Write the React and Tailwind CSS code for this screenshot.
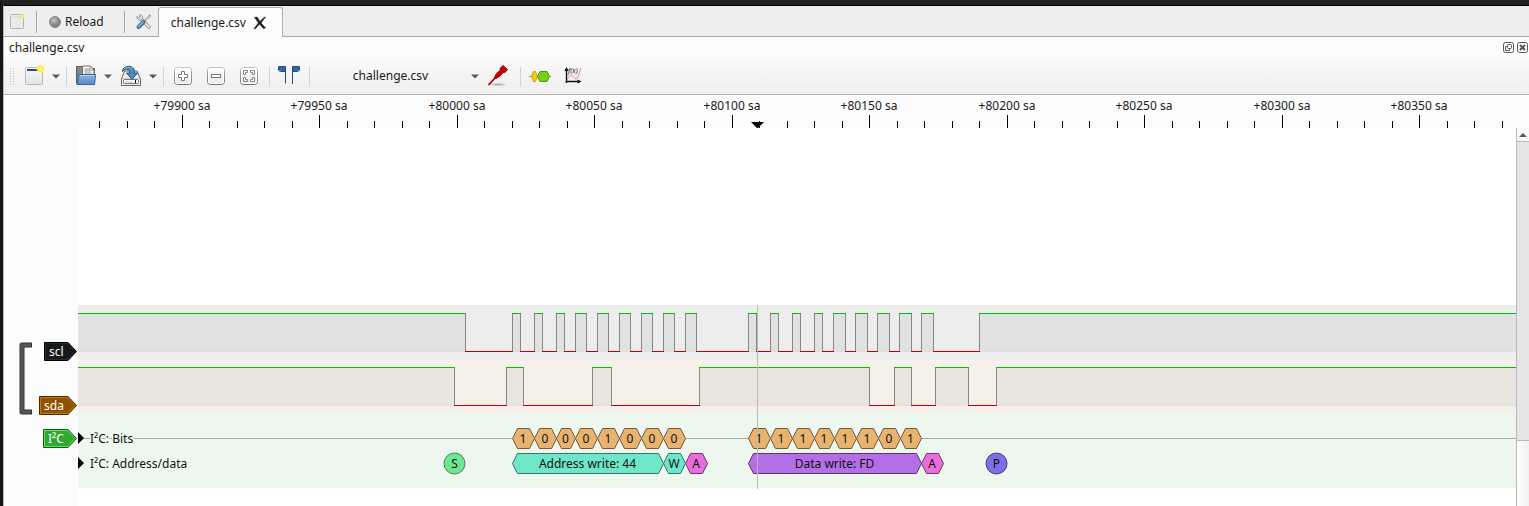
import React from "react";

const SCL_EDGES = [
  465, 512, 520, 534, 542, 556, 564, 575, 586, 597, 608, 619, 630, 641, 652, 663, 674, 685, 696,
  748, 756, 770, 778, 792, 800, 814, 822, 833, 845, 855, 867, 877, 889, 899, 911, 921, 933, 979,
];
const SDA_EDGES = [454, 506, 523, 592, 611, 699, 869, 894, 911, 935, 968, 996];

const BITS = [
  [512, 534, "1"], [534, 556, "0"], [556, 575, "0"], [575, 597, "0"],
  [597, 619, "1"], [619, 641, "0"], [641, 663, "0"], [663, 685, "0"],
  [748, 770, "1"], [770, 792, "1"], [792, 814, "1"], [814, 834, "1"],
  [834, 856, "1"], [856, 878, "1"], [878, 900, "0"], [900, 921, "1"],
];

const WORDS = [
  [512, 663, "Address write: 44", "#6ee7c9", "#37746a"],
  [663, 685, "W", "#6ee7c9", "#37746a"],
  [685, 707, "A", "#e76edc", "#74376e"],
  [748, 921, "Data write: FD", "#b46ee7", "#5a3774"],
  [921, 943, "A", "#e76edc", "#74376e"],
];

const FAR = 6000;

function Trace({ edges, top, fill }) {
  const points = [0, ...edges, FAR];
  const low = top + 38;
  return (
    <g shapeRendering="crispEdges">
      {points.slice(0, -1).map((x, i) =>
        i % 2 === 0 ? (
          <rect key={x} x={x} y={top} width={points[i + 1] - x} height="38" fill={fill} />
        ) : null
      )}
      <rect x="0" y={low} width={FAR} height="1" fill="#000" fillOpacity="0.07" />
      {edges.map((x) => (
        <rect key={x} x={x} y={top} width="1" height="38" fill="#878787" />
      ))}
      {points.slice(0, -1).map((x, i) => (
        <rect
          key={x}
          x={x}
          y={i % 2 === 0 ? top : low}
          width={points[i + 1] - x + 1}
          height="1"
          fill={i % 2 === 0 ? "#00c000" : "#c00000"}
        />
      ))}
    </g>
  );
}

function Hexagon({ x1, x2, cy, label, fill, stroke }) {
  const a = x1 + 0.5;
  const b = x2 + 0.5;
  const m = cy + 0.5;
  return (
    <g>
      <polygon
        points={`${a},${m} ${a + 5},${m - 10} ${b - 5},${m - 10} ${b},${m} ${b - 5},${m + 10} ${a + 5},${m + 10}`}
        fill={fill}
        stroke={stroke}
      />
      <text x={(x1 + x2) / 2} y={cy + 5} textAnchor="middle" fill="#111">{label}</text>
    </g>
  );
}

function Circle({ cx, label, fill, stroke }) {
  return (
    <g>
      <circle cx={cx + 0.5} cy="463.5" r="10.5" fill={fill} stroke={stroke} />
      <text x={cx + 0.5} y="468" textAnchor="middle" fill="#111">{label}</text>
    </g>
  );
}

function Ruler() {
  const ticks = Array.from({ length: 52 }, (_, i) => i - 3);
  return (
    <svg className="block h-[33px] w-full bg-[#fcfcfc] text-xs" role="img" aria-label="Sample ruler">
      <g transform="translate(-4,-95)">
        {ticks.map((k) => {
          const x = Math.floor(182 + 27.5 * k);
          const major = k % 5 === 0;
          return (
            <g key={k}>
              <rect x={x} y={major ? 115 : 121} width="1" height={major ? 13 : 7} fill="#000" />
              {major && (
                <text x={x} y="110" textAnchor="middle" fill="#1a1a1a">
                  {`+${79900 + k * 10} sa`}
                </text>
              )}
            </g>
          );
        })}
        <path d="M751 122h13l-6 6h-1z" fill="#000" />
      </g>
    </svg>
  );
}

function TraceView() {
  return (
    <svg className="block h-[378px] w-full bg-white text-xs" role="img" aria-label="Decoded logic traces">
      <rect y="177" width="100%" height="54" fill="#ededed" />
      <rect y="231" width="100%" height="54" fill="#f5f0ea" />
      <rect y="285" width="100%" height="75" fill="#edf7ee" />
      <g transform="translate(-78,-128)">
        <Trace edges={SCL_EDGES} top={313} fill="#e1e1e1" />
        <Trace edges={SDA_EDGES} top={367} fill="#e9e6df" />
        <rect x="78" y="438" width="434" height="1" fill="#a6aca7" />
        <rect x="686" y="438" width="63" height="1" fill="#a6aca7" />
        <rect x="922" y="438" width={FAR} height="1" fill="#a6aca7" />
        <path d="M78 432l6 6-6 6zM78 457l6 6-6 6z" fill="#000" />
        <g fill="#111" stroke="#edf7ee" strokeWidth="3" paintOrder="stroke">
          <text x="90" y="443">I²C: Bits</text>
          <text x="90" y="468">I²C: Address/data</text>
        </g>
        {BITS.map(([a, b, t]) => (
          <Hexagon key={a} x1={a} x2={b} cy={438} label={t} fill="#e7b36e" stroke="#745937" />
        ))}
        {WORDS.map(([a, b, t, f, s]) => (
          <Hexagon key={a} x1={a} x2={b} cy={463} label={t} fill={f} stroke={s} />
        ))}
        <Circle cx={454} label="S" fill="#6ee790" stroke="#46805a" />
        <Circle cx={996} label="P" fill="#7d6ee7" stroke="#463c80" />
        <rect x="757" y="305" width="1" height="184" fill="#b9b9b9" />
      </g>
    </svg>
  );
}

function SignalTag({ children, width, fill, border, inner }) {
  const w = width;
  return (
    <button type="button" className="relative flex h-[19px] items-center pl-[5px] text-left text-white" style={{ width }}>
      <svg className="absolute inset-0 h-full w-full" viewBox={`0 0 ${w} 19`} aria-hidden="true">
        <path d={`M.5 .5H${w - 9}L${w - 0.5} 9.5L${w - 9} 18.5H.5z`} fill={fill} stroke={border} />
        <path d={`M1.5 1.5H${w - 9.5}L${w - 2} 9.5L${w - 9.5} 17.5H1.5z`} fill="none" stroke={inner} />
      </svg>
      <span className="relative leading-4">{children}</span>
    </button>
  );
}

function Separator() {
  return <div className="h-[19px] w-px shrink-0 bg-[#d3d3d3]" />;
}

function IconButton({ label, className = "", children }) {
  return (
    <button type="button" aria-label={label} className={`h-[22px] w-[22px] shrink-0 ${className}`}>
      <svg viewBox="0 0 22 22" className="block h-[22px] w-[22px]" aria-hidden="true">{children}</svg>
    </button>
  );
}

function Arrow() {
  return (
    <svg viewBox="0 0 12 12" className="block h-3 w-3" aria-hidden="true">
      <path d="M2 4.500h8L6 8.500z" fill="#5a5a5a" />
    </svg>
  );
}

function MenuArrow({ label, className = "" }) {
  return (
    <button type="button" aria-label={label} className={`shrink-0 ${className}`}><Arrow /></button>
  );
}

function ZoomFrame() {
  return (
    <>
      <rect x="2.500" y="2.500" width="17" height="17" rx="3" fill="url(#zoomFace)" stroke="url(#zoomEdge)" />
      <rect x="3.500" y="3.500" width="15" height="15" rx="2" fill="none" stroke="#fff" />
    </>
  );
}

function Toolbar() {
  return (
    <div role="toolbar" aria-label="Session" className="flex h-[39px] items-center border-b border-[#b3b3b3] bg-linear-to-b from-[#fbfbfb] to-[#eeeeee] pt-[2px] pl-[6px]">
      <svg viewBox="0 0 4 17" className="h-[17px] w-1 shrink-0" aria-hidden="true">
        <path d="M.5 0v17M3.500 0v17" stroke="#bdbdbd" strokeDasharray="1 1.6" />
      </svg>
      <IconButton label="New session" className="ml-[9px]">
        <defs>
          <linearGradient id="page" x1="0" y1="0" x2="0" y2="1"><stop stopColor="#fafafa" /><stop offset="1" stopColor="#e2e2e2" /></linearGradient>
          <radialGradient id="spark"><stop stopColor="#fffce0" /><stop offset=".5" stopColor="#f7ee36" /><stop offset=".8" stopColor="#f9f258" /><stop offset="1" stopColor="#f9f258" stopOpacity=".3" /></radialGradient>
        </defs>
        <rect x="2.500" y="2.500" width="17" height="17" rx="1" fill="url(#page)" stroke="#b9b9b9" />
        <rect x="4" y="4" width="12" height="2" fill="#204a87" />
        <circle cx="17.500" cy="4" r="4" fill="url(#spark)" />
      </IconButton>
      <MenuArrow label="New session menu" className="ml-[5px] mr-1" />
      <Separator />
      <IconButton label="Open" className="ml-2">
        <defs><linearGradient id="folder" x1="0" y1="0" x2="0" y2="1"><stop stopColor="#8fb6e4" /><stop offset="1" stopColor="#5687c2" /></linearGradient></defs>
        <path d="M1.500 18.500V1.500h7l1.500 2h9.500v14.500z" fill="#858783" stroke="#5b5d5a" />
        <path d="M7.500 12V1h8l3.500 4v8h-11.500z" fill="#f5f5f5" stroke="#70726f" />
        <path d="M9.500 4h5M9.500 6h6M9.500 8h7M15 1.500V5h3.500" stroke="#949494" fill="none" />
        <path d="M4 9.500h16.500l-1 10H2z" fill="url(#folder)" stroke="#3465a4" />
        <path d="M5 10.500h14.500" stroke="#b4cfee" />
      </IconButton>
      <MenuArrow label="Open menu" className="ml-[5px] mr-[6px]" />
      <IconButton label="Save">
        <path d="M4.500 6h12.500l3.500 8v6.500h-19V14z" fill="#ededeb" stroke="#666965" strokeLinejoin="round" />
        <path d="M2 13.500h18" stroke="#d0d0ce" />
        <rect x="3.500" y="14.500" width="15" height="4" rx="1" fill="#fafafa" stroke="#777" />
        <path d="M4.500 17h8" stroke="#c6c6c6" />
        <path d="M15.500 15v3" stroke="#000" />
        <path d="M2.500 6.500C2.500 1 10 .2 12.500 2.500c2 1.600 2 3.500 2 5.500h3l-5.500 6.500L6.500 8h3.200C9.800 4.500 6 3 2.500 6.500z" fill="#4b8bbd" stroke="#285a84" strokeLinejoin="round" />
        <path d="M4 4.300C6 1.700 11 1.700 12.500 4.500" fill="none" stroke="#8fc0e0" />
      </IconButton>
      <MenuArrow label="Save menu" className="ml-[5px] mr-1" />
      <Separator />
      <IconButton label="Zoom in" className="ml-2 mr-[11px]">
        <defs>
          <linearGradient id="zoomFace" x1="0" y1="0" x2="0" y2="1"><stop stopColor="#fff" /><stop offset="1" stopColor="#e7e7e5" /></linearGradient>
          <linearGradient id="zoomEdge" x1="0" y1="0" x2="0" y2="1"><stop stopColor="#c0c0be" /><stop offset="1" stopColor="#6c6e6a" /></linearGradient>
        </defs>
        <ZoomFrame />
        <path d="M9.500 6.500h3v3h3v3h-3v3h-3v-3h-3v-3h3z" fill="#fff" stroke="#777975" />
      </IconButton>
      <IconButton label="Zoom out" className="mr-[11px]">
        <ZoomFrame />
        <rect x="6.500" y="9.500" width="9" height="3" fill="#fff" stroke="#777975" />
      </IconButton>
      <IconButton label="Zoom to fit" className="mr-[9px]">
        <ZoomFrame />
        <path d="M5.500 5.500h4v2h-2v2h-2zM16.500 5.500h-4v2h2v2h2zM5.500 16.500h4v-2h-2v-2h-2zM16.500 16.500h-4v-2h2v-2h2z" fill="#fff" stroke="#858783" />
      </IconButton>
      <Separator />
      <IconButton label="Show cursors" className="ml-2 mr-[9px]">
        <path d="M.500 1.500h7v17M.500 1.500v4l2 1h5M14.500 19V1.500h7v4l-2 1h-5" fill="none" stroke="#204a87" />
        <path d="M1 2h6v4H3L1 5zM15 2h6v3l-2 1h-4z" fill="#3465a4" />
      </IconButton>
      <Separator />
      <div className="relative ml-[10px] w-[161px] shrink-0">
        <select aria-label="Device" className="block h-6 w-full appearance-none bg-transparent pr-5 text-center text-xs [text-align-last:center]" defaultValue="challenge.csv">
          <option>challenge.csv</option>
        </select>
        <span className="pointer-events-none absolute top-[6px] right-0"><Arrow /></span>
      </div>
      <IconButton label="Configure channels" className="ml-[6px] mr-[11px]">
        <defs><radialGradient id="shade"><stop stopColor="#000" stopOpacity=".3" /><stop offset="1" stopColor="#000" stopOpacity="0" /></radialGradient></defs>
        <ellipse cx="11" cy="19.500" rx="10" ry="2" fill="url(#shade)" />
        <path d="M1.500 20L9.500 11.500" stroke="#a40000" strokeWidth="1.800" />
        <path d="M7.500 12.500L9.500 8.500 13.500 5l-.5-1.500L16 .500l4.500 4L18 7.500l-1.500-.5-3.500 4-4 2.500z" fill="#c00" stroke="#a40000" strokeLinejoin="round" />
        <path d="M13.500 4.500l3.500 3" stroke="#a40000" />
      </IconButton>
      <Separator />
      <IconButton label="Add protocol decoder" className="ml-2 mr-[11px]">
        <path d="M0 11.500h22" stroke="#888a85" />
        <path d="M2.500 11.500L4.500 6.500h2l2 5-2 5h-2z" fill="#edd400" stroke="#c4a000" />
        <path d="M8.500 11.500L11 6.500h7l2.500 5-2.500 5h-7z" fill="#73d216" stroke="#4e9a06" />
      </IconButton>
      <IconButton label="Add math signal">
        <path d="M4.500 4v14M3.500 16.500h14" stroke="#111" strokeWidth="1.300" />
        <path d="M4.500 2l2.200 4H2.300zM19.500 16.500l-4-2v4z" fill="#111" />
        <path d="M5 16c1-4 2.500-6 4.500-5.500s3.500 4.500 5.500 2.500c2-2 2-6 4-10" fill="none" stroke="#ef5350" strokeOpacity=".7" />
        <text x="6" y="8" fontSize="7" fontStyle="italic" fill="#222">f(x)</text>
      </IconButton>
    </div>
  );
}

function SessionTabs() {
  return (
    <nav aria-label="Sessions" className="flex h-[31px] items-stretch bg-[#eeeeee] shadow-[inset_0_-1px_#a9a9a9]">
      <div className="flex items-center pt-px pl-[5px]">
        <button type="button" aria-label="New session">
          <svg viewBox="0 0 18 18" className="block h-[18px] w-[18px]" aria-hidden="true">
            <rect x="1.500" y="1.500" width="13" height="14" rx="1" fill="#ebebe9" stroke="#b5b5b0" />
            <path d="M3 4h9" stroke="#d4d4d0" />
            <circle cx="13" cy="3" r="2.500" fill="#eee98e" />
          </svg>
        </button>
        <div className="ml-[9px] h-[22px] w-px bg-[#aaaaaa]" />
        <button type="button" className="ml-3 flex items-center gap-[4px] leading-4">
          <svg viewBox="0 0 12 12" className="h-3 w-3" aria-hidden="true">
            <defs><radialGradient id="led" cx=".4" cy=".35"><stop stopColor="#c0c2be" /><stop offset="1" stopColor="#7f827e" /></radialGradient></defs>
            <circle cx="6" cy="6" r="5.500" fill="url(#led)" stroke="#8b8d89" />
          </svg>
          Reload
        </button>
        <div className="ml-5 h-[22px] w-px bg-[#aaaaaa]" />
        <button type="button" aria-label="Settings" className="ml-[10px]">
          <svg viewBox="0 0 18 18" className="block h-[18px] w-[18px]" aria-hidden="true">
            <path d="M5.500 5.500l8.500 8.500" stroke="#8a8c88" strokeWidth="3.600" strokeLinecap="round" />
            <path d="M5.500 5.500l8.500 8.500" stroke="#e6e6e4" strokeWidth="2" strokeLinecap="round" />
            <path d="M2 3c-.5 3 1.500 4.500 4.500 4 1.500-1.500 1.500-5-1.500-5.500v2.500L3.500 4.500z" fill="#e3e3e1" stroke="#8a8c88" strokeWidth=".8" />
            <path d="M15.500 2L9 8.500" stroke="#999b97" strokeWidth="2.200" />
            <path d="M15 2.500L9 8.500" stroke="#e8e8e8" strokeWidth=".9" />
            <path d="M8.500 9L3.500 14" stroke="#3e6694" strokeWidth="4" strokeLinecap="round" />
            <path d="M8 9L3.500 13.500" stroke="#7da5d2" strokeWidth="2" strokeLinecap="round" />
          </svg>
        </button>
      </div>
      <div className="ml-[5px] mt-px flex items-center gap-[7px] rounded-t-[3px] border border-b-0 border-[#adadad] bg-[#fcfcfc] pr-[15px] pl-3">
        <a href="#session" className="leading-4">challenge.csv</a>
        <button type="button" aria-label="Close session">
          <svg viewBox="0 0 14 14" className="block h-[14px] w-[14px]" aria-hidden="true">
            <path d="M1.500 1.500L4 1l3 4.500L11 1.500l1.500-.5-4.500 6 4.500 5-2 .5-4-4.500-4 4.500-1.500.3 4.500-6z" fill="#181818" stroke="#181818" strokeWidth=".6" strokeLinejoin="round" />
          </svg>
        </button>
      </div>
    </nav>
  );
}

function TitleButtons() {
  return (
    <div className="flex gap-[3px]">
      <button type="button" aria-label="Float">
        <svg viewBox="0 0 11 11" className="block h-[11px] w-[11px]" fill="none" stroke="#555753" aria-hidden="true">
          <rect x=".5" y=".5" width="10" height="10" rx="2" />
          <rect x="4.500" y="2.500" width="4" height="4" rx="1" />
          <path d="M4 4.500H2.500v4h4V7" />
        </svg>
      </button>
      <button type="button" aria-label="Close">
        <svg viewBox="0 0 11 11" className="block h-[11px] w-[11px]" fill="none" stroke="#555753" aria-hidden="true">
          <rect x=".5" y=".5" width="10" height="10" rx="2" />
          <path d="M3 3l5 5M8 3l-5 5" strokeWidth="2" />
        </svg>
      </button>
    </div>
  );
}

export default function App() {
  return (
    <div className="flex min-h-screen flex-col border-t-[5px] border-l-[3px] border-t-[#222222] border-l-[#161616] bg-[#fcfcfc] font-['Noto_Sans',sans-serif] text-xs text-[#1a1a1a]">
      <div className="flex flex-1 flex-col border-t border-l border-t-black border-l-[#b8b8b8]">
        <SessionTabs />
        <header className="flex h-[19px] items-center justify-between pt-[2px] pr-px pl-[5px]">
          <h1 className="leading-4">challenge.csv</h1>
          <TitleButtons />
        </header>
        <Toolbar />
        <main id="session" className="flex flex-1 flex-col">
          <Ruler />
          <div className="flex flex-1">
            <aside aria-label="Signals" className="flex w-[74px] shrink-0 items-start justify-between pt-[214px] pr-px pl-[15px]">
              <svg viewBox="0 0 13 73" className="h-[73px] w-[13px] shrink-0" aria-hidden="true">
                <path d="M13 3H3v67h10" fill="none" stroke="#2e3436" strokeWidth="5" strokeLinejoin="round" />
                <path d="M12 3H3v67h9" fill="none" stroke="#555753" strokeWidth="3" />
              </svg>
              <div className="flex flex-col items-end">
                <SignalTag width={33} fill="#16191a" border="#000000" inner="#262b2d">scl</SignalTag>
                <div className="mt-[35px]"><SignalTag width={38} fill="#8f5202" border="#4a2a00" inner="#c9780c">sda</SignalTag></div>
                <div className="mt-[14px]"><SignalTag width={34} fill="#32a832" border="#1a571a" inner="#4df04d">I²C</SignalTag></div>
              </div>
            </aside>
            <div className="min-w-0 flex-1 bg-white"><TraceView /></div>
            <div className="flex w-[13px] shrink-0 flex-col border-l border-[#b8b8b8] bg-linear-to-r from-white to-[#f0f0f0]">
              <button type="button" aria-label="Scroll up" className="flex h-[14px] items-center justify-center border-b border-[#b8b8b8] bg-[#f8f8f8]">
                <svg viewBox="0 0 8 4" className="h-1 w-2" aria-hidden="true"><path d="M0 4h8L4 0z" fill="#5a5a5a" /></svg>
              </button>
              <div className="h-[299px] border-b border-[#b8b8b8] bg-[#e5e5e5]" />
            </div>
          </div>
        </main>
      </div>
    </div>
  );
}
